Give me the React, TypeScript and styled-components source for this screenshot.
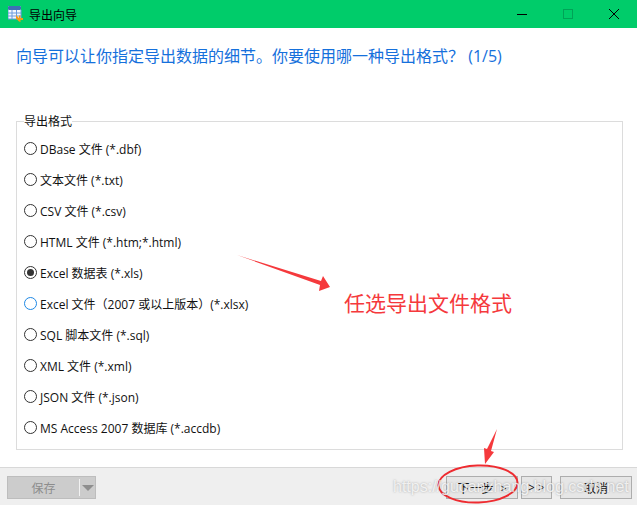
import React from "react";
import styled, { createGlobalStyle } from "styled-components";

const Global = createGlobalStyle`
  html, body { margin: 0; padding: 0; background: #fff; }
  body { font-family: "Open Sans", "Noto Sans CJK SC", sans-serif; }
`;

const Window = styled.div`
  position: relative;
  width: 637px;
  height: 505px;
  display: flex;
  flex-direction: column;
  overflow: hidden;
  background: #fff;
`;

const TitleBar = styled.div`
  height: 28px;
  flex: none;
  display: flex;
  align-items: center;
  background: #00cc6a;
  padding-left: 8px;
`;

const TitleText = styled.span`
  margin-left: 5px;
  font: 12px "Noto Sans CJK SC", sans-serif;
  color: #000;
`;

const WindowButtons = styled.div`
  margin-left: auto;
  display: flex;
`;

const WindowButton = styled.div`
  width: 46px;
  height: 28px;
  display: flex;
  align-items: center;
  justify-content: center;
`;

const Body = styled.div`
  flex: 1;
  min-height: 0;
  display: flex;
  flex-direction: column;
  padding: 16px 14px 17px 16px;
`;

const Heading = styled.div`
  height: 24px;
  flex: none;
  font: 16px/24px "Open Sans", "Noto Sans CJK SC", sans-serif;
  color: #1570dc;
  white-space: nowrap;
`;

const Group = styled.fieldset`
  flex: 1;
  margin: 46px 0 0;
  padding: 5px 0 0 7px;
  min-width: 0;
  border: 1px solid #dcdcdc;
  display: flex;
  flex-direction: column;
`;

const Legend = styled.legend`
  margin-left: 0;
  padding: 0;
  font: 12px/14px "Noto Sans CJK SC", sans-serif;
  color: #111;
`;

const Row = styled.div`
  height: 31px;
  flex: none;
  display: flex;
  align-items: center;
  gap: 3px;
  font: 12px "Open Sans", "Noto Sans CJK SC", sans-serif;
  color: #111;
  white-space: nowrap;
`;

const Radio = styled.span<{ $focus?: boolean; $on?: boolean }>`
  box-sizing: border-box;
  width: 13px;
  height: 13px;
  flex: none;
  border-radius: 50%;
  border: 1px solid ${(p) => (p.$focus ? "#1e88e5" : "#333")};
  display: flex;
  align-items: center;
  justify-content: center;
  &::after {
    content: "";
    display: ${(p) => (p.$on ? "block" : "none")};
    width: 7px;
    height: 7px;
    border-radius: 50%;
    background: #333;
  }
`;

const Footer = styled.div`
  height: 29px;
  flex: none;
  box-sizing: content-box;
  border-top: 1px solid #d8d8d8;
  background: #efefef;
  display: flex;
  align-items: flex-start;
  padding: 8px 5px 0 7px;
`;

const SaveButton = styled.div`
  box-sizing: border-box;
  width: 89px;
  height: 23px;
  background: #cccccc;
  border: 1px solid #bdbdbd;
  display: flex;
  align-items: center;
  color: #8c8c8c;
  font: 12px "Noto Sans CJK SC", sans-serif;
`;

const SaveLabel = styled.span`
  width: 71px;
  text-align: center;
`;

const SaveDivider = styled.span`
  width: 1px;
  height: 17px;
  background: #f2f2f2;
`;

const SaveCaret = styled.span`
  margin-left: 2px;
  width: 0;
  height: 0;
  border-left: 6px solid transparent;
  border-right: 6px solid transparent;
  border-top: 6px solid #8e8e8e;
`;

const Spacer = styled.div`
  flex: 1;
`;

const Button = styled.div<{ $w: number; $ml: number }>`
  box-sizing: border-box;
  width: ${(p) => p.$w}px;
  margin-left: ${(p) => p.$ml}px;
  height: 23px;
  background: #e6e6e6;
  border: 1px solid #adadad;
  display: flex;
  align-items: center;
  justify-content: center;
  color: #111;
  font: 12px "Open Sans", "Noto Sans CJK SC", sans-serif;
  white-space: pre;
`;

const Overlay = styled.svg`
  position: absolute;
  inset: 0;
  width: 637px;
  height: 505px;
  pointer-events: none;
`;

const Callout = styled.div`
  position: absolute;
  left: 344px;
  top: 287px;
  font: 21px/30px "Noto Sans CJK SC", sans-serif;
  color: #f5393c;
  white-space: nowrap;
`;

const Watermark = styled.div`
  position: absolute;
  left: 393px;
  top: 476px;
  font: 16px/22px "Liberation Sans", sans-serif;
  color: rgba(255, 255, 255, 0.78);
  text-shadow: 0 0 2px rgba(90, 90, 90, 0.5);
  white-space: nowrap;
`;

const formats: { label: string; on?: boolean; focus?: boolean }[] = [
  { label: "DBase 文件 (*.dbf)" },
  { label: "文本文件 (*.txt)" },
  { label: "CSV 文件 (*.csv)" },
  { label: "HTML 文件 (*.htm;*.html)" },
  { label: "Excel 数据表 (*.xls)", on: true },
  { label: "Excel 文件（2007 或以上版本）(*.xlsx)", focus: true },
  { label: "SQL 脚本文件 (*.sql)" },
  { label: "XML 文件 (*.xml)" },
  { label: "JSON 文件 (*.json)" },
  { label: "MS Access 2007 数据库 (*.accdb)" },
];

const AppIcon = () => (
  <svg width="16" height="16" viewBox="0 0 16 16">
    <rect x="0" y="0" width="13" height="13" rx="1" fill="#f4f7fd" />
    <rect x="0" y="0" width="13" height="4" rx="1" fill="#3f6fb5" />
    <path d="M0 4v9M4 4v9M8.5 4v9M13 4v9M0 7h13M0 10h13M0 13h13" stroke="#6a9be0" strokeWidth="1" fill="none" />
    <path d="M8 9l3 3V9.5h1.5V12H15v2h-2.5v2l-1.5-0.5-3-3z" fill="#f59a16" />
  </svg>
);

export default function App() {
  return (
    <Window>
      <Global />
      <TitleBar>
        <AppIcon />
        <TitleText>导出向导</TitleText>
        <WindowButtons>
          <WindowButton>
            <svg width="10" height="10" viewBox="0 0 10 10">
              <path d="M0 5.5h10" stroke="#000" strokeWidth="1" />
            </svg>
          </WindowButton>
          <WindowButton>
            <svg width="10" height="10" viewBox="0 0 10 10">
              <rect x="0.5" y="0.5" width="9" height="9" fill="none" stroke="#00a357" />
            </svg>
          </WindowButton>
          <WindowButton>
            <svg width="10" height="10" viewBox="0 0 10 10">
              <path d="M0 0l10 10M10 0L0 10" stroke="#000" strokeWidth="1" />
            </svg>
          </WindowButton>
        </WindowButtons>
      </TitleBar>
      <Body>
        <Heading>向导可以让你指定导出数据的细节。你要使用哪一种导出格式？ (1/5)</Heading>
        <Group>
          <Legend>导出格式</Legend>
          {formats.map((f) => (
            <Row key={f.label}>
              <Radio $on={f.on} $focus={f.focus} />
              {f.label}
            </Row>
          ))}
        </Group>
      </Body>
      <Footer>
        <SaveButton>
          <SaveLabel>保存</SaveLabel>
          <SaveDivider />
          <SaveCaret />
        </SaveButton>
        <Spacer />
        <Button $w={72} $ml={0}>下一步  &gt;</Button>
        <Button $w={31} $ml={3}>&gt; &gt;</Button>
        <Button $w={72} $ml={8}>取消</Button>
      </Footer>
      <Overlay viewBox="0 0 637 505">
        <path d="M237 255L321 281L323 276L330 287L319 291L320 285Z" fill="#f5393c" />
        <ellipse cx="478" cy="484" rx="39.5" ry="18.5" fill="none" stroke="#ee2b30" strokeWidth="2" transform="rotate(-2 478 484)" />
        <path d="M497 429L491 451L494 452L485 464L484 448L487 449Z" fill="#f5393c" />
      </Overlay>
      <Callout>任选导出文件格式</Callout>
      <Watermark>https://guoanzhang.blog.csdn.net</Watermark>
    </Window>
  );
}
